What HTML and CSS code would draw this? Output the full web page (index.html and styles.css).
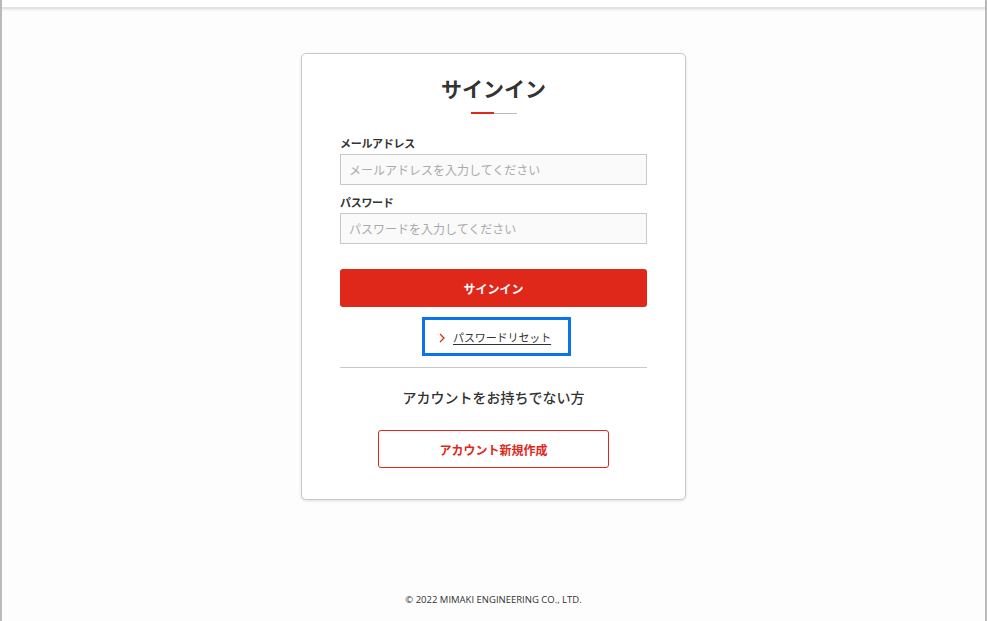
FILE: index.html
```html
<!DOCTYPE html>
<html lang="ja">
<head>
<meta charset="utf-8">
<title>サインイン</title>
<link rel="stylesheet" href="styles.css">
</head>
<body>
<div class="page">
  <header class="topbar"></header>
  <main class="main">
    <section class="card">
      <h1 class="title">サインイン</h1>
      <div class="title-line"><span class="red"></span><span class="gray"></span></div>
      <form class="form">
        <label class="label">メールアドレス</label>
        <input class="input" type="text" placeholder="メールアドレスを入力してください">
        <label class="label label2">パスワード</label>
        <input class="input" type="password" placeholder="パスワードを入力してください">
        <button class="btn-primary" type="button">サインイン</button>
      </form>
      <div class="reset-row">
        <a class="reset-link" href="#">
          <svg class="chev" width="6" height="10" viewBox="0 0 6 10"><path d="M1 1 L5 5 L1 9" fill="none" stroke="#e0281a" stroke-width="1.3"/></svg>
          <span>パスワードリセット</span>
        </a>
      </div>
      <hr class="divider">
      <p class="no-account">アカウントをお持ちでない方</p>
      <div class="create-row">
        <a class="btn-outline" href="#">アカウント新規作成</a>
      </div>
    </section>
  </main>
  <footer class="footer">© 2022 MIMAKI ENGINEERING CO., LTD.</footer>
</div>
</body>
</html>
```
FILE: styles.css
```css
* { box-sizing: border-box; }
html, body { margin: 0; padding: 0; }
body {
  font-family: "Noto Sans CJK JP", "Noto Sans", sans-serif;
  color: #333;
  background: #fff;
}
.page {
  height: 621px;
  border-left: 2px solid #bbb;
  border-right: 2px solid #bbb;
  background: #fdfdfd;
  display: flex;
  flex-direction: column;
}
.topbar {
  height: 9px;
  background: #fff;
  border-bottom: 2px solid #e2e2e2;
  box-shadow: 0 1px 3px rgba(0,0,0,0.08);
}
.main {
  display: flex;
  justify-content: center;
  padding-top: 44px;
  flex: 1;
}
.card {
  width: 385px;
  height: 447px;
  background: #fff;
  border: 1px solid #c8c8c8;
  border-radius: 5px;
  box-shadow: 0 1px 3px rgba(0,0,0,0.12);
  padding: 17px 38px 0 38px;
}
.title {
  margin: 0;
  text-align: center;
  font-size: 21px;
  font-weight: 700;
  line-height: 34px;
  color: #333;
}
.title-line {
  display: flex;
  justify-content: center;
  margin-top: 7px;
}
.title-line span { height: 2px; width: 23px; }
.title-line .red { background: #e0281a; }
.title-line .gray { background: #bbb; height: 1px; margin-top: 1px; }
.form { display: flex; flex-direction: column; margin-top: 20px; }
.label {
  font-size: 11px;
  font-weight: 700;
  line-height: 18px;
  letter-spacing: -0.3px;
  color: #333;
}
.label2 { margin-top: 8px; }
.input {
  margin-top: 2px;
  height: 31px;
  width: 100%;
  border: 1px solid #c8c8c8;
  background: #fafafa;
  padding: 0 8px;
  font-family: inherit;
  font-size: 12px;
  color: #333;
  outline: none;
  border-radius: 0;
}
.input::placeholder { color: #aaa; }
.btn-primary {
  margin-top: 25px;
  height: 38px;
  width: 100%;
  background: #e0281a;
  color: #fff;
  border: none;
  border-radius: 3px;
  font-family: inherit;
  font-size: 12px;
  font-weight: 700;
}
.reset-row {
  display: flex;
  justify-content: center;
  margin-top: 10px;
}
.reset-link {
  width: 149px;
  height: 39px;
  margin-left: 6px;
  border: 3px solid #0a74f0;
  display: flex;
  align-items: center;
  padding-left: 14px;
  gap: 8px;
  color: #333;
  font-size: 11px;
  letter-spacing: -0.1px;
  text-decoration: none;
}
.reset-link span { text-decoration: underline; text-underline-offset: 2px; }
.chev { flex: none; margin-top: 2px; }
.divider {
  margin: 11px 0 0;
  border: none;
  border-top: 1px solid #c8c8c8;
}
.no-account {
  margin: 18px 0 0;
  text-align: center;
  font-size: 14px;
  font-weight: 500;
  line-height: 22px;
  color: #333;
}
.create-row {
  display: flex;
  justify-content: center;
  margin-top: 22px;
}
.btn-outline {
  width: 231px;
  height: 38px;
  border: 1px solid #e0281a;
  border-radius: 3px;
  display: flex;
  align-items: center;
  justify-content: center;
  color: #e0281a;
  font-size: 12px;
  font-weight: 700;
  text-decoration: none;
}
.footer {
  text-align: center;
  font-family: "Open Sans", "Noto Sans", sans-serif;
  font-size: 9.5px;
  color: #333;
  padding-bottom: 14px;
  line-height: 14px;
}
```
